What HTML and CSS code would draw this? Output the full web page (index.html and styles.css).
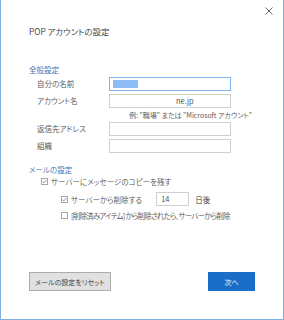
FILE: index.html
```html
<!DOCTYPE html>
<html lang="ja">
<head>
    <meta charset="UTF-8">
    <title>POP アカウントの設定</title>
    <link rel="stylesheet" href="styles.css">
</head>
<body>
    <div class="window">
        <div class="titlebar">
            <svg class="close" viewBox="0 0 8 8" width="8" height="8">
                <path d="M0.5 0.5 L7.5 7.5 M7.5 0.5 L0.5 7.5" stroke="#555" stroke-width="0.9"/>
            </svg>
        </div>

        <div class="title">POP アカウントの設定</div>

        <div class="section">全般設定</div>
        <div class="form-grid">
            <div class="label">自分の名前</div>
            <div class="field focused"><span class="selection"></span></div>

            <div class="label">アカウント名</div>
            <div class="field"><span class="account">ne.jp</span></div>

            <div class="hint">例: "職場" または "Microsoft アカウント"</div>

            <div class="label">返信先アドレス</div>
            <div class="field"></div>

            <div class="label">組織</div>
            <div class="field"></div>
        </div>

        <div class="section mail">メールの設定</div>
        <div class="check-row first">
            <span class="checkbox checked"></span>
            <span>サーバーにメッセージのコピーを残す</span>
        </div>
        <div class="check-row sub days-row">
            <span class="checkbox checked"></span>
            <span>サーバーから削除する</span>
            <div class="field days">14</div>
            <span class="days-unit">日後</span>
        </div>
        <div class="check-row sub">
            <span class="checkbox"></span>
            <span class="tight">[削除済みアイテム] から削除されたら、サーバーから削除</span>
        </div>

        <div class="buttons">
            <button class="btn reset">メールの設定をリセット</button>
            <button class="btn primary">次へ</button>
        </div>
    </div>
</body>
</html>
```

FILE: styles.css
```css
body {
    margin: 0;
    background-color: white;
}

.window {
    width: 284px;
    height: 320px;
    box-sizing: border-box;
    border: 1px solid #7eb1e2;
    border-top: none;
    background-color: white;
    display: flex;
    flex-direction: column;
    font-family: "Noto Sans CJK JP", "Noto Sans", sans-serif;
    font-feature-settings: "palt";
    font-weight: 350;
    font-size: 7.5px;
    color: #505050;
}

.titlebar {
    height: 22px;
    box-sizing: border-box;
    display: flex;
    justify-content: flex-end;
    padding: 7px 10px 0 0;
}

.close {
    display: block;
}

.title {
    margin: 2px 0 0 28px;
    line-height: 14px;
    font-size: 8.4px;
    color: #333;
}

.section {
    margin: 26px 0 0 28px;
    line-height: 12px;
    font-size: 7.5px;
    color: #2f6cb6;
}

.section.mail {
    margin-top: 12px;
    line-height: 10px;
}

.form-grid {
    display: grid;
    grid-template-columns: 72px 122px;
    grid-template-rows: 14px 14px 8px 14px 14px;
    row-gap: 3px;
    margin: 1px 0 0 36px;
}

.label {
    line-height: 14px;
    white-space: nowrap;
}

.field {
    box-sizing: border-box;
    height: 14px;
    border: 1px solid #cfcfcf;
    background-color: white;
    line-height: 12px;
    color: #444;
}

.field.focused {
    border-color: #80b6ee;
    padding: 2px 0 0 3px;
}

.selection {
    display: block;
    width: 25px;
    height: 8px;
    background-color: #8ebcf7;
}

.account {
    padding-left: 66px;
}

.hint {
    grid-column: 1 / -1;
    padding-left: 92px;
    line-height: 8px;
    font-size: 7px;
    white-space: nowrap;
}

.check-row {
    display: flex;
    align-items: center;
    gap: 3px;
    height: 12px;
    margin-left: 40px;
    white-space: nowrap;
}

.check-row.sub {
    margin-left: 60px;
    margin-top: 3px;
}

.check-row.days-row {
    height: 14px;
    margin-top: 5px;
}

.tight {
    letter-spacing: -0.8px;
}

.checkbox {
    width: 7px;
    height: 7px;
    box-sizing: border-box;
    border: 1px solid #a8a8a8;
    background-color: white;
    flex-shrink: 0;
}

.checkbox.checked {
    background-image: url("data:image/svg+xml;utf8,<svg xmlns='http://www.w3.org/2000/svg' viewBox='0 0 5 5'><path d='M0.6 2.6 L1.9 3.9 L4.4 0.9' fill='none' stroke='%23666' stroke-width='0.7'/></svg>");
    background-size: 5px 5px;
    background-repeat: no-repeat;
}

.field.days {
    width: 33px;
    margin-left: 11px;
    padding-left: 4px;
}

.days-unit {
    margin-left: 3px;
    color: #333;
}

.buttons {
    margin-top: auto;
    padding: 0 28px 28px 28px;
    display: flex;
    justify-content: space-between;
}

.btn {
    height: 19px;
    box-sizing: border-box;
    font-family: "Noto Sans CJK JP", "Noto Sans", sans-serif;
    font-feature-settings: "palt";
    font-weight: 350;
    font-size: 7px;
    padding: 0;
    cursor: pointer;
}

.btn.reset {
    width: 82px;
    background-color: #e1e1e1;
    border: 1px solid #adadad;
    color: #333;
}

.btn.primary {
    width: 47px;
    background-color: #1b6ec7;
    border: 1px solid #1b6ec7;
    color: white;
}
```
